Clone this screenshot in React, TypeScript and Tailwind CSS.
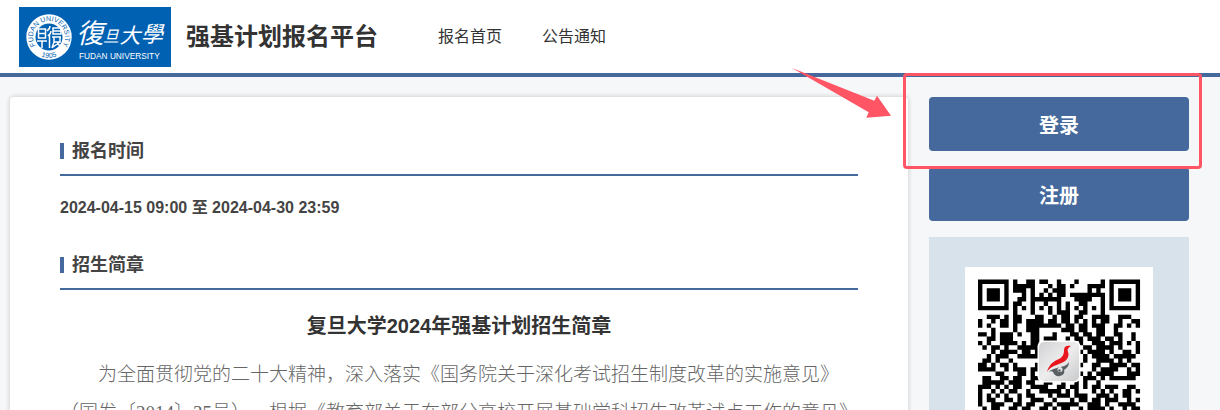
import React from 'react';

const NAV_LINKS = ['报名首页', '公告通知'];

// One string per module row of the 37 x 37 code
const QR_ROWS = [
  '1111111010011011001000100000101111111',
  '1000001011111000101101000111101000001',
  '1011101011101001011100000101001011101',
  '1011101000101010101101111111101011101',
  '1011101001101111111000111100101011101',
  '1000001011001001001010011000101000001',
  '1111111010101010101010101010101111111',
  '0000000010001000101110011000100000000',
  '0011101011000110010110110011110011100',
  '1001011011011110110110101010110010011',
  '1010011010011111111011011011100110101',
  '0001000010011100000111011001100100000',
  '1101011101001100010001101101100110010',
  '0011011100001101110010110111011010010',
  '1010011110101100000000010011101110101',
  '0101101001111100000000001101111010001',
  '0001011110110100000000010111101001101',
  '0010111001111100000000001011110111110',
  '0110100100000000000000001001111010100',
  '1101011010000100000000010011001111011',
  '1111001011101100000000000010111100101',
  '0000110001101000000000010101111000111',
  '0110011011001100000000001110101111110',
  '0111110111011001100100101001000000000',
  '1110101011001111001101101011011100110',
  '1001010110010011111010100010101001101',
  '1010101001011000101110111001110101100',
  '1011001101001110010001011011011100101',
  '1001110011011001101111100111010011110',
  '0101100110110011010110010111101001011',
  '1100101011001010110101101010111110110',
  '0010110110100101001011010110100011011',
  '1111111010110010110100101100101010110',
  '1000001001011010011011010100100011001',
  '1011101011001101100101101101111110110',
  '1011101001110010110110011011001101001',
  '1111111010011101001011010110110100111',
];

const qrPath = QR_ROWS.map((row, y) =>
  [...row].map((m, x) => (m === '1' ? `M${x} ${y}h1v1h-1z` : '')).join('')
).join('');

const FudanLogo: React.FC = () => (
  <svg viewBox="0 0 152 60" className="h-[60px] w-[152px] shrink-0" role="img" aria-label="复旦大学">
    <defs>
      <path id="sealTop" d="M16.9 39.200A16 16 0 1 1 43.100 39.200" />
      <path id="sealBottom" d="M14 43.500A21 21 0 0 0 46 43.500" />
    </defs>
    <rect width="152" height="60" fill="#0060b2" />
    <circle cx="30" cy="30" r="22.7" fill="#fff" />
    <circle cx="30" cy="30" r="13.500" fill="#0060b2" />
    <g fill="#0060b2" className="font-['Liberation_Sans']">
      <text fontSize="7">
        <textPath href="#sealTop" startOffset="50%" textAnchor="middle">FUDAN UNIVERSITY</textPath>
      </text>
      <text fontSize="7">
        <textPath href="#sealBottom" startOffset="50%" textAnchor="middle">1905</textPath>
      </text>
    </g>
    {/* seal script characters */}
    <g fill="none" stroke="#fff" strokeWidth="1.5">
      <path d="M19.5 22h7v9h-7zM19.5 26.500h7M18 34h10M23 34v7" />
      <path d="M31 19c0 3-2 4-3 5M32 24c0 3-2 4-3 5M30.500 28v13M34 21h8v6h-8zM34 24h8M33 30h9M35 30v5h6v-5M35 35l-2 6M38 35l4 6M41 35l-7 5" />
    </g>
    <g fill="#fff" className="font-['Noto_Sans_CJK_SC',sans-serif] italic" textAnchor="middle">
      <text x="71" y="36" fontSize="27">復</text>
      <text x="92" y="35" fontSize="16">旦</text>
      <text x="111" y="36" fontSize="21">大</text>
      <text x="133" y="35" fontSize="22">學</text>
    </g>
    <text x="60" y="52" fill="#fff" className="font-['Liberation_Sans']" fontSize="8.3">FUDAN UNIVERSITY</text>
  </svg>
);

const QrCode: React.FC = () => (
  <svg viewBox="0 0 188 188" className="w-full" role="img" aria-label="二维码">
    <defs>
      <linearGradient id="badge" x1="0" y1="0" x2="1" y2="1">
        <stop offset="0" stopColor="#d2d2d4" />
        <stop offset="0.5" stopColor="#ededee" />
        <stop offset="1" stopColor="#c9cacb" />
      </linearGradient>
    </defs>
    <rect width="188" height="188" fill="#fff" />
    <path d={qrPath} transform="translate(13 12.600) scale(4.380)" fill="#000" />
    <rect x="72.500" y="73.500" width="43" height="42" rx="6" fill="#fff" />
    <rect x="74" y="75" width="40" height="39" rx="5" fill="url(#badge)" />
    <path d="M106 79c-4-1-7 0-7 4 0 4-1 7-5 9-5 2-10 5-12 13 3-5 7-6 12-8 7-2 11-7 9-12-1-3 0-4 3-6z" fill="#e8161d" />
    <path d="M104 95c-3 5-7 4-12 6-4 1-7 2-8 4 2-1 3-1 4 0 1 3 4 5 7 4 4-1 5-4 4-6 3-2 5-4 5-8z" fill="#5b5e63" />
    <circle cx="95" cy="102.500" r="2.500" fill="#e4e5e6" />
    <circle cx="94.500" cy="103.500" r="1.200" fill="#5b5e63" />
  </svg>
);

const SectionTitle: React.FC<{ children: React.ReactNode }> = ({ children }) => (
  <h2 className="flex items-center gap-2 border-b-2 border-[#45699c] pb-2.5 text-[18px] leading-[26px] font-bold text-[#444]">
    <span className="h-4 w-1 bg-[#45699c]" />
    {children}
  </h2>
);

const SideButton: React.FC<{ children: React.ReactNode }> = ({ children }) => (
  <button
    type="button"
    className="h-[54px] w-full cursor-pointer rounded bg-[#45699c] pt-1 text-[20px] leading-[30px] font-bold text-white"
  >
    {children}
  </button>
);

export default function App() {
  return (
    <div className="h-screen overflow-hidden bg-[#f5f7f9] font-['Liberation_Sans','Noto_Sans_CJK_SC',sans-serif] text-[#333]">
      <header className="flex items-center border-b-4 border-[#45699c] bg-white pt-[7px] pb-1.5 pl-[19px]">
        <FudanLogo />
        <h1 className="ml-[15px] text-[24px] leading-[36px] font-bold">强基计划报名平台</h1>
        <nav className="ml-[60px] flex gap-10 text-[16px] leading-[24px]">
          {NAV_LINKS.map((label) => (
            <a key={label} href="#">{label}</a>
          ))}
        </nav>
      </header>

      <div className="flex items-start gap-[21px] pt-5 pr-[31px] pl-2.5">
        <main className="min-w-0 flex-1 rounded bg-white px-[50px] pt-[41px] pb-12 shadow-[0_0_4px_1px_rgba(0,0,0,0.14)]">
          <SectionTitle>报名时间</SectionTitle>
          <p className="mt-5 text-[16px] leading-[24px] font-bold text-[#444]">
            2024-04-15 09:00 至 2024-04-30 23:59
          </p>

          <div className="mt-8">
            <SectionTitle>招生简章</SectionTitle>
          </div>
          <h3 className="mt-5 text-center text-[20px] leading-[32px] font-bold">
            复旦大学2024年强基计划招生简章
          </h3>
          <p className="mt-3.5 indent-[2em] font-['Liberation_Serif','Noto_Sans_CJK_SC',serif] text-[19px] leading-[38px] font-light text-[#666] [text-spacing-trim:space-all]">
            为全面贯彻党的二十大精神，深入落实《国务院关于深化考试招生制度改革的实施意见》（国发〔2014〕35号），根据《教育部关于在部分高校开展基础学科招生改革试点工作的意见》
          </p>
        </main>

        <aside className="w-[260px] shrink-0 space-y-4">
          <div className="relative">
            <SideButton>登录</SideButton>
            {/* callout frame and arrow around the login button */}
            <div className="pointer-events-none absolute -top-6 -right-[13px] -bottom-[18px] -left-[26px] z-10 rounded border-3 border-[#ff5565]" />
            <svg viewBox="0 0 100 51" className="pointer-events-none absolute -top-[29px] -left-[137px] h-[51px] w-[100px]">
              <path d="M0 0L82.300 32.700L85 27.700L99 47.700L74.300 49.700L76.700 44.300Z" fill="#ff5565" />
            </svg>
          </div>
          <SideButton>注册</SideButton>
          <div className="bg-[#d8e2ea] px-9 py-[30px]">
            <QrCode />
          </div>
        </aside>
      </div>
    </div>
  );
}
